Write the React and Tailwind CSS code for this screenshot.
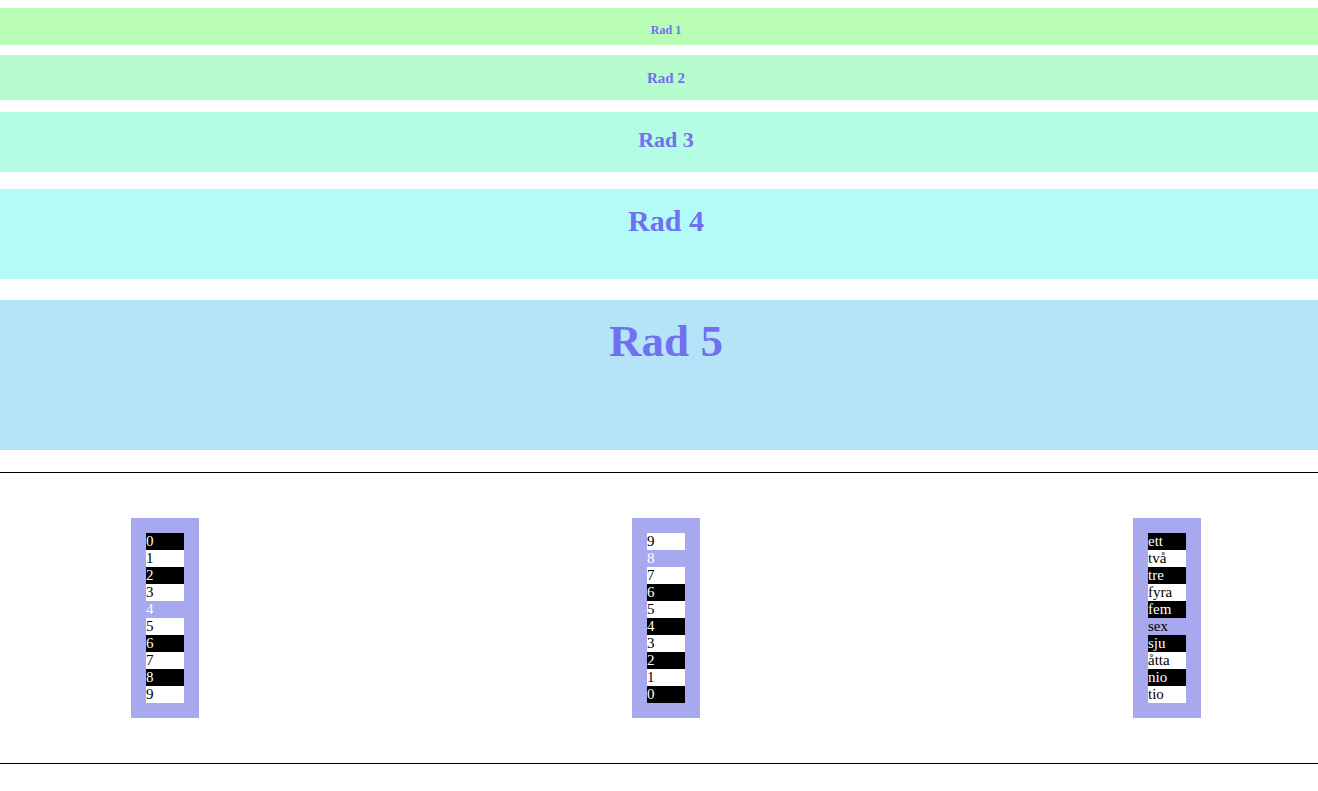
export default function App() {
  const bands = [
    { t: "Rad 1", cls: "mt-[8px] h-[37px] bg-[#b9fcb6] text-[12px]" },
    { t: "Rad 2", cls: "mt-[10px] h-[45px] bg-[#b6fcce] text-[15px]" },
    { t: "Rad 3", cls: "mt-[12px] h-[60px] bg-[#b5fce4] text-[22px]" },
    { t: "Rad 4", cls: "mt-[17px] h-[90px] bg-[#b3fbf9] text-[30px]" },
    { t: "Rad 5", cls: "mt-[21px] h-[150px] bg-[#b5e4f9] text-[45px]" },
  ];
  // kind: b = black, w = white, n = none
  const lists = [
    [
      ["0", "b"], ["1", "w"], ["2", "b"], ["3", "w"], ["4", "nw"],
      ["5", "w"], ["6", "b"], ["7", "w"], ["8", "b"], ["9", "w"],
    ],
    [
      ["9", "w"], ["8", "nw"], ["7", "w"], ["6", "b"], ["5", "w"],
      ["4", "b"], ["3", "w"], ["2", "b"], ["1", "w"], ["0", "b"],
    ],
    [
      ["ett", "b"], ["två", "w"], ["tre", "b"], ["fyra", "w"], ["fem", "b"],
      ["sex", "nb"], ["sju", "b"], ["åtta", "w"], ["nio", "b"], ["tio", "w"],
    ],
  ];
  const rowCls = {
    b: "bg-black text-white",
    w: "bg-white text-black",
    nw: "text-white",
    nb: "text-black",
  };
  return (
    <div className="w-[1318px] overflow-hidden bg-white" style={{ fontFamily: '"Liberation Serif", "Times New Roman", serif' }}>
      <div className="w-[1332px]">
        {bands.map((b) => (
          <div
            key={b.t}
            className={`${b.cls} pt-[15px] text-center font-bold leading-[normal] text-[#7070f0]`}
          >
            {b.t}
          </div>
        ))}
        <div className="mt-[22px] h-px bg-black" />
        <div className="flex gap-[433px] px-[131px] py-[45px]">
          {lists.map((l, i) => (
            <div key={i} className="w-[68px] bg-[#a8a8ee] p-[15px]">
              {l.map(([t, k]) => (
                <div key={t} className={`h-[17px] text-[15px] leading-[17px] ${rowCls[k]}`}>
                  {t}
                </div>
              ))}
            </div>
          ))}
        </div>
        <div className="h-px bg-black" />
        <div className="h-[27px]" />
      </div>
    </div>
  );
}
